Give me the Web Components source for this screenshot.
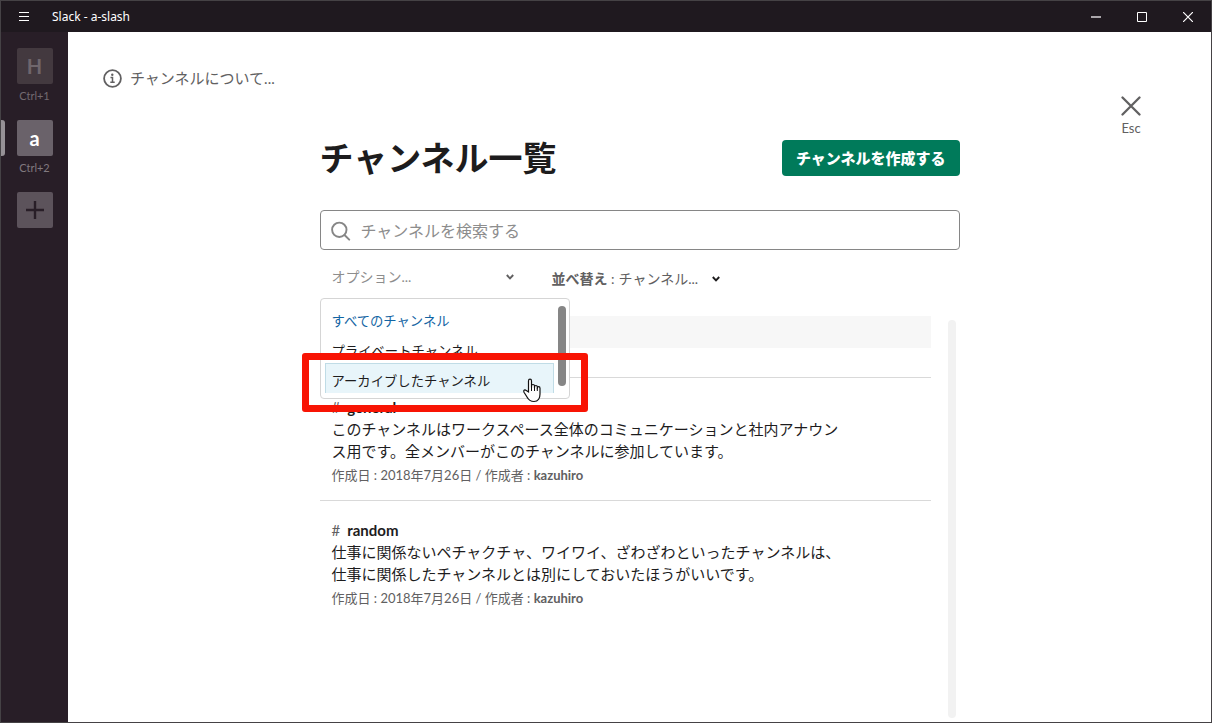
<!DOCTYPE html>
<html lang="ja">
<head>
<meta charset="utf-8">
<meta name="viewport" content="width=device-width, initial-scale=1">
<title>Slack - a-slash</title>
<style>
body { margin: 0; font-family: Lato, "Noto Sans CJK JP", sans-serif; font-size: 15px; line-height: 22px; color: #1d1c1d; }
</style>
</head>
<body>
<app-window>
  <title-bar slot="title">Slack - a-slash</title-bar>
  <team-rail slot="rail">
    <team-tile letter="H" key="Ctrl+1"></team-tile>
    <team-tile letter="a" key="Ctrl+2" active></team-tile>
  </team-rail>
  <page-tools>チャンネルについて...</page-tools>
  <channel-browser>
    <browser-header slot="header">チャンネル一覧</browser-header>
    <search-field slot="search" placeholder="チャンネルを検索する"></search-field>
    <filter-row slot="filters"></filter-row>
    <channel-row name="general" date="2018年7月26日" author="kazuhiro">このチャンネルはワークスペース全体のコミュニケーションと社内アナウンス用です。全メンバーがこのチャンネルに参加しています。</channel-row>
    <channel-row name="random" date="2018年7月26日" author="kazuhiro">仕事に関係ないペチャクチャ、ワイワイ、ざわざわといったチャンネルは、仕事に関係したチャンネルとは別にしておいたほうがいいです。</channel-row>
  </channel-browser>
</app-window>

<script>
const define = (name, render) => customElements.define(name, class extends HTMLElement {
  constructor() { super(); this.attachShadow({ mode: "open" }); }
  connectedCallback() {
    this.shadowRoot.innerHTML = `<style>
      :host, * { box-sizing: border-box; }
      button { font-family: inherit; border: 0; background: none; padding: 0; margin: 0; color: inherit; cursor: pointer; }
      svg { display: block; fill: none; stroke: currentColor; }
    </style>` + render(this);
  }
});

define("app-window", () => `<style>
  :host { display: grid; grid-template: auto 1fr / 67px 1fr; min-height: 100vh; border: 1px solid #454245; background: #fff; }
  slot[name=title] { display: block; grid-column: 1 / -1; }
  main { display: flex; flex-direction: column; min-width: 0; }
</style>
<slot name="title"></slot><slot name="rail"></slot><main><slot></slot></main>`);

define("title-bar", () => `<style>
  :host { display: flex; align-items: center; height: 31px; background: #1f191f; color: #fff; font: 12px/16px "Noto Sans", sans-serif; }
  button { display: grid; place-items: center; width: 46px; height: 31px; }
  .title { flex: 1; padding-left: 5px; }
  .min { color: #aaa6aa; }
</style>
<button aria-label="メニュー"><svg width="10" height="10"><path d="M0 .5h10M0 4.500h10M0 8.500h10"/></svg></button>
<span class="title"><slot></slot></span>
<button class="min" aria-label="最小化"><svg width="10" height="10"><path d="M0 5h10" stroke-width="2"/></svg></button>
<button aria-label="最大化"><svg width="10" height="10"><path d="M.5 .5h9v9h-9z"/></svg></button>
<button aria-label="閉じる"><svg width="10" height="10"><path d="M0 0l10 10M10 0L0 10" stroke-width="1.2"/></svg></button>`);

define("team-rail", () => `<style>
  :host { display: flex; flex-direction: column; align-items: stretch; padding-top: 16px; background: #281e27; color: #736a71; }
  .add { align-self: center; display: grid; place-items: center; width: 36px; height: 36px; border-radius: 2px; background: #5c535b; color: #281e27; }
</style>
<slot></slot>
<button class="add" aria-label="ワークスペースを追加"><svg width="20" height="20"><path d="M10 1v18M1 10h18" stroke-width="2.4"/></svg></button>`);

define("team-tile", el => `<style>
  :host { display: grid; grid-template-columns: 4px 1fr 4px; height: 72px; }
  button { display: flex; flex-direction: column; align-items: center; gap: 4px; font-size: 11px; line-height: 16px; }
  b { display: grid; place-items: center; width: 36px; height: 36px; border-radius: 2px; background: #43393f; color: #6f666c; font: 700 20px/36px Lato, sans-serif; }
  .mark { height: 36px; border-radius: 0 3px 3px 0; }
  :host([active]) .mark { background: #969196; }
  :host([active]) b { background: #6a626a; color: #fff; }
  :host([active]) button { color: #81797f; }
</style>
<span class="mark"></span><button><b>${el.getAttribute("letter")}</b><span>${el.getAttribute("key")}</span></button>`);

define("page-tools", () => `<style>
  :host { display: flex; justify-content: space-between; align-items: flex-start; height: 102px; padding: 0 70px 0 35px; color: #616061; }
  .about { display: flex; align-items: center; gap: 8px; margin-top: 35px; font-size: 15px; line-height: 22px; }
  .close { display: flex; flex-direction: column; align-items: center; gap: 2px; margin-top: 64px; font-size: 13px; line-height: 20px; }
</style>
<button class="about"><svg width="19" height="19" viewBox="0 0 19 19"><circle cx="9.500" cy="9.500" r="8.400" stroke-width="1.800"/><path d="M7.500 8.400h2v4.400M7.300 13.200h4.400" stroke-width="1.500"/><circle cx="9.300" cy="5.800" r="1.200" fill="currentColor" stroke="none"/></svg><span><slot></slot></span></button>
<button class="close"><svg width="20" height="20"><path d="M1.500 1.500l17 17M18.500 1.500l-17 17" stroke-width="2.300" stroke-linecap="round"/></svg>Esc</button>`);

define("channel-browser", () => `<style>
  :host { flex: 1; display: flex; flex-direction: column; width: 100%; max-width: 640px; margin: 0 auto; padding-top: 6px; }
  .results { flex: 1; display: flex; gap: 17px; padding: 0 4px 4px 0; }
  .list { flex: 1; min-width: 0; }
  .heading { height: 32px; margin-bottom: 29px; background: #f7f7f7; }
  .track { width: 8px; margin-top: 4px; border-radius: 4px; background: #f2f2f2; }
</style>
<slot name="header"></slot><slot name="search"></slot><slot name="filters"></slot>
<div class="results"><div class="list"><div class="heading"></div><slot></slot></div><div class="track"></div></div>`);

define("browser-header", () => `<style>
  :host { display: flex; justify-content: space-between; align-items: center; height: 36px; }
  h1 { margin: 0; font-size: 34px; line-height: 36px; font-weight: 700; }
  button { height: 36px; padding: 0 14px; border-radius: 4px; background: #007a5a; color: #fff; font-size: 15px; line-height: 22px; font-weight: 900; }
</style>
<h1><slot></slot></h1><button>チャンネルを作成する</button>`);

define("search-field", el => `<style>
  :host { display: block; margin-top: 34px; }
  label { display: flex; align-items: center; gap: 10px; height: 40px; padding: 0 10px; border: 1px solid #868686; border-radius: 4px; color: #868686; }
  input { flex: 1; min-width: 0; height: 36px; border: 0; padding: 0; outline: 0; background: none; font-family: inherit; font-size: 16px; color: #1d1c1d; }
  input::placeholder { color: #8d8d8d; opacity: 1; }
</style>
<label><svg width="20" height="22" viewBox="0 0 20 22"><circle cx="8.300" cy="10.800" r="7.200" stroke-width="1.900"/><path d="M13.500 16l4.700 4.600" stroke-width="2" stroke-linecap="round"/></svg><input type="search" aria-label="${el.getAttribute("placeholder")}" placeholder="${el.getAttribute("placeholder")}"></label>`);

const chevron = `<svg class="chev" width="10" height="8"><path d="M1.800 2l3.200 3.400L8.200 2" stroke-width="1.900"/></svg>`;
define("filter-row", () => `<style>
  :host { display: grid; grid-template-columns: 220px 1fr; align-items: start; height: 66px; padding: 16px 12px 0; position: relative; color: #616061; }
  .field { display: flex; align-items: center; font-size: 14px; }
  .options { width: 183px; }
  .sort { padding-top: 2px; gap: 4px; }
  select { appearance: none; border: 0; padding: 0; margin: 0; background: none; font-family: inherit; font-size: inherit; line-height: 22px; color: inherit; opacity: 1; }
  .options select { flex: 1; color: #8d8d8d; }
  .sort select { width: 88px; }
  .sort .chev { color: #1d1c1d; }
  option-menu { position: absolute; left: 0; top: 48px; z-index: 1; }
</style>
<div class="field options"><select aria-label="オプション"><option>オプション...</option></select>${chevron}</div>
<div class="field sort"><label for="sort"><b>並べ替え</b> :</label><select id="sort"><option>チャンネル...</option></select>${chevron}</div>
<option-menu></option-menu>`);

define("option-menu", () => `<style>
  :host { display: block; width: 250px; color: #1d1c1d; }
  .menu { display: flex; gap: 4px; padding: 4px 3px 5px 4px; border: 1px solid #d5d5d5; border-radius: 4px; background: #fff; }
  .items { flex: 1; height: 90px; overflow: hidden; }
  .items button { display: block; width: 100%; height: 32px; margin-bottom: -2px; padding: 3px 6px 0; border: 1px solid transparent; text-align: left; line-height: 26px; }
  .items .current { color: #1264a3; }
  .items .hover { background: #e8f5fa; border-color: #c0dce6; }
  .thumb { width: 8px; height: 80px; margin-top: 3px; border-radius: 4px; background: #868686; }
  .frame { position: absolute; left: -18px; top: 55px; width: 286px; height: 59px; border: 7px solid #f81404; border-radius: 3px; pointer-events: none; }
  .hand { position: absolute; left: 202px; top: 80px; }
</style>
<div class="menu"><div class="items" role="listbox" aria-label="オプション">
<button class="current" role="option" aria-selected="true">すべてのチャンネル</button><button role="option">プライベートチャンネル</button><button class="hover" role="option">アーカイブしたチャンネル</button>
</div><div class="thumb"></div></div>
<div class="frame"></div>
<svg class="hand" width="20" height="25" viewBox="0 0 20 25"><path d="M6.500 14V3C6.500 .6 9.500 .6 9.500 3v6.500V8c0-2 3-2 3 0v2V9c0-2 2.800-2 2.800 0v2.200V10c0-1.800 2.700-1.800 2.700.2V16c0 4-1.600 7.500-6 7.500-4 0-5.500-1.500-7-4.500l-3-4.800c-1-2 .9-3 2.300-1.600z" fill="#fff" stroke="#111" stroke-width="1.200"/><path d="M9.500 9v4M12.500 10v3M15.300 10.500V13" stroke="#111"/></svg>`);

define("channel-row", el => `<style>
  :host { display: block; padding: 18px 88px 16px 12px; border-top: 1px solid #d9d9d9; }
  h2 { display: flex; gap: 7px; margin: 0; font-size: 15px; line-height: 22px; font-weight: 700; }
  h2 span { color: #616061; font-weight: 400; }
  a { color: inherit; text-decoration: none; }
  p { margin: 0; }
  .meta { font-size: 13px; color: #616061; line-height: 22px; padding-top: 2px; margin-bottom: -2px; }
</style>
<h2><span>#</span><a href="#${el.getAttribute("name")}">${el.getAttribute("name")}</a></h2>
<p><slot></slot></p>
<p class="meta">作成日 : ${el.getAttribute("date")} / 作成者 : <b>${el.getAttribute("author")}</b></p>`);
</script>
</body>
</html>
